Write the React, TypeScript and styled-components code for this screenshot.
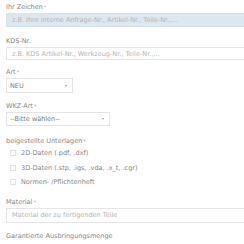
import React from "react";
import styled, { createGlobalStyle } from "styled-components";

const Global = createGlobalStyle`
  html, body { margin: 0; padding: 0; background: #fff; }
  body { font-family: "DejaVu Sans", "Noto Sans", sans-serif; }
`;

const Form = styled.div`
  display: flex;
  flex-direction: column;
  padding: 3px 0 0 6px;
  width: 250px;
  overflow: hidden;
`;

const Field = styled.div<{ $mb: number }>`
  display: flex;
  flex-direction: column;
  margin-bottom: ${(p) => p.$mb}px;
`;

const Label = styled.div`
  font-size: 6.5px;
  color: #858585;
  line-height: 8px;
  height: 8px;
  margin-bottom: 2px;
  white-space: nowrap;
`;

const Star = styled.span`
  color: #a5a5a5;
  font-size: 5px;
  vertical-align: top;
  margin-left: 1px;
`;

const Input = styled.div<{ $filled?: boolean; $h?: number }>`
  box-sizing: border-box;
  height: ${(p) => p.$h ?? 14}px;
  width: 100%;
  border: 1px solid ${(p) => (p.$filled ? "#d6e1ea" : "#e6e6e6")};
  background: ${(p) => (p.$filled ? "#dde7f0" : "#fff")};
  font-size: 6.5px;
  color: #b4b4b4;
  display: flex;
  align-items: center;
  padding-left: 5px;
  white-space: nowrap;
  overflow: hidden;
`;

const Select = styled.div<{ $w: number; $h: number }>`
  box-sizing: border-box;
  height: ${(p) => p.$h}px;
  width: ${(p) => p.$w}px;
  border: 1px solid #e4e4e4;
  background: #fff;
  font-size: 6.5px;
  color: #7a7a7a;
  display: flex;
  align-items: center;
  justify-content: space-between;
  padding: 0 5px 0 3px;
  white-space: nowrap;
`;

const Caret = styled.span`
  width: 0;
  height: 0;
  border-left: 1.5px solid transparent;
  border-right: 1.5px solid transparent;
  border-top: 2px solid #999;
`;

const CheckList = styled.div`
  display: flex;
  flex-direction: column;
  margin-top: -1px;
`;

const CheckRow = styled.div`
  display: flex;
  align-items: center;
  height: 14.5px;
  padding-left: 4px;
  gap: 5px;
  font-size: 6.5px;
  color: #858585;
  white-space: nowrap;
`;

const Box = styled.span`
  box-sizing: border-box;
  width: 6px;
  height: 6px;
  border: 1px solid #e2e2e2;
  background: #fff;
`;

export default function App() {
  return (
    <>
      <Global />
      <Form>
        <Field $mb={10}>
          <Label>Ihr Zeichen<Star>*</Star></Label>
          <Input $filled>z.B. Ihre interne Anfrage-Nr., Artikel-Nr., Teile-Nr.,…</Input>
        </Field>
        <Field $mb={8}>
          <Label>KDS-Nr.</Label>
          <Input $h={13}>z.B. KDS Artikel-Nr., Werkzeug-Nr., Teile-Nr.,…</Input>
        </Field>
        <Field $mb={9}>
          <Label>Art<Star>*</Star></Label>
          <Select $w={67} $h={15}>NEU<Caret /></Select>
        </Field>
        <Field $mb={11}>
          <Label>WKZ-Art<Star>*</Star></Label>
          <Select $w={104} $h={14}>--Bitte wählen--<Caret /></Select>
        </Field>
        <Field $mb={8}>
          <Label>beigestellte Unterlagen<Star>*</Star></Label>
          <CheckList>
            <CheckRow><Box />2D-Daten (.pdf, .dxf)</CheckRow>
            <CheckRow><Box />3D-Daten (.stp, .igs, .vda, .x_t, .cgr)</CheckRow>
            <CheckRow><Box />Normen- /Pflichtenheft</CheckRow>
          </CheckList>
        </Field>
        <Field $mb={9}>
          <Label>Material<Star>*</Star></Label>
          <Input $h={15}>Material der zu fertigenden Teile</Input>
        </Field>
        <Field $mb={0}>
          <Label>Garantierte Ausbringungsmenge</Label>
        </Field>
      </Form>
    </>
  );
}
